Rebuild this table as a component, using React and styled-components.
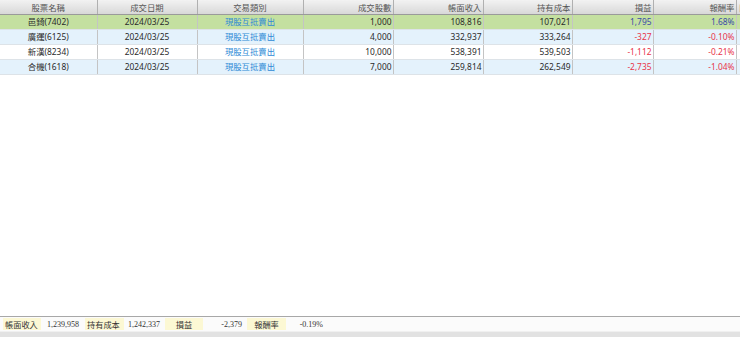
import React from 'react';
import styled, { createGlobalStyle } from 'styled-components';

const GlobalStyle = createGlobalStyle`
  html, body {
    margin: 0;
    padding: 0;
    background: #ffffff;
  }
  body {
    font-family: "Noto Sans", "Noto Sans CJK TC", sans-serif;
  }
`;

const columns = [
  { key: 'name', title: '股票名稱', width: 97, align: 'center' },
  { key: 'date', title: '成交日期', width: 100, align: 'center' },
  { key: 'type', title: '交易類別', width: 106, align: 'center' },
  { key: 'qty', title: '成交股數', width: 90, align: 'right' },
  { key: 'income', title: '帳面收入', width: 90, align: 'right' },
  { key: 'cost', title: '持有成本', width: 89, align: 'right' },
  { key: 'pnl', title: '損益', width: 81, align: 'right' },
  { key: 'rate', title: '報酬率', width: 83, align: 'right' },
  { key: 'day', title: '日', width: 70, align: 'left' },
];

const rows = [
  { name: '邑錡(7402)', date: '2024/03/25', type: '現股互抵賣出', qty: '1,000', income: '108,816', cost: '107,021', pnl: '1,795', rate: '1.68%', day: '', tone: 'selected' },
  { name: '廣運(6125)', date: '2024/03/25', type: '現股互抵賣出', qty: '4,000', income: '332,937', cost: '333,264', pnl: '-327', rate: '-0.10%', day: '', tone: 'alt' },
  { name: '新漢(8234)', date: '2024/03/25', type: '現股互抵賣出', qty: '10,000', income: '538,391', cost: '539,503', pnl: '-1,112', rate: '-0.21%', day: '', tone: 'plain' },
  { name: '合機(1618)', date: '2024/03/25', type: '現股互抵賣出', qty: '7,000', income: '259,814', cost: '262,549', pnl: '-2,735', rate: '-1.04%', day: '', tone: 'alt' },
];

const rowBg = {
  selected: '#c4e0a0',
  alt: '#e4f2fc',
  plain: '#ffffff',
};

const valueColor = (key, row) => {
  if (key === 'type') return '#2e8ad6';
  if (key === 'pnl' || key === 'rate') {
    return row[key].startsWith('-') ? '#e8344a' : '#3a4aa8';
  }
  return '#2a2a2a';
};

const App = () => {
  return (
    <Screen>
      <GlobalStyle />
      <GridArea>
        <Table>
          <colgroup>
            {columns.map((c) => (
              <col key={c.key} style={{ width: c.width }} />
            ))}
          </colgroup>
          <thead>
            <tr>
              {columns.map((c) => (
                <HeadCell key={c.key} $align={c.align}>
                  {c.title}
                </HeadCell>
              ))}
            </tr>
          </thead>
          <tbody>
            {rows.map((row) => (
              <Row key={row.name} $tone={row.tone}>
                {columns.map((c) => (
                  <Cell key={c.key} $align={c.align} $color={valueColor(c.key, row)}>
                    {row[c.key]}
                  </Cell>
                ))}
              </Row>
            ))}
          </tbody>
        </Table>
      </GridArea>
      <Summary>
        <Label $w={38} $align="left">帳面收入</Label>
        <Value $w={44} $align="left" $pad="0 0 0 6px">1,239,958</Value>
        <Label $w={39} $align="left">持有成本</Label>
        <Value $w={41} $align="left" $pad="0 0 0 4px">1,242,337</Value>
        <Label $w={38} $align="center">損益</Label>
        <Value $w={44} $align="right" $pad="0 5px 0 0">-2,379</Value>
        <Label $w={39} $align="center">報酬率</Label>
        <Value $w={40} $align="right" $pad="0 3px 0 0">-0.19%</Value>
      </Summary>
      <BottomStrip />
    </Screen>
  );
};

const Screen = styled.div`
  width: 740px;
  height: 337px;
  display: flex;
  flex-direction: column;
  overflow: hidden;
  background: #ffffff;
`;

const GridArea = styled.div`
  flex: 1;
  overflow: hidden;
`;

const Table = styled.table`
  table-layout: fixed;
  width: 806px;
  border-collapse: collapse;
  font-size: 8.4px;
`;

const HeadCell = styled.th`
  height: 14px;
  padding: ${(p) => (p.$align === 'right' ? '0 1px 0 2px' : '0 2px')};
  line-height: 13px;
  font-weight: normal;
  color: #555555;
  text-align: ${(p) => p.$align};
  white-space: nowrap;
  overflow: hidden;
  background: linear-gradient(#f2f2f2, #d8d8d8);
  border-right: 1px solid #b0b0b0;
  border-bottom: 1px solid #9a9a9a;
`;

const Row = styled.tr`
  background: ${(p) => rowBg[p.$tone]};
`;

const Cell = styled.td`
  height: 14px;
  padding: ${(p) => (p.$align === 'right' ? '0 1px 0 2px' : '0 2px')};
  line-height: 14px;
  color: ${(p) => p.$color};
  text-align: ${(p) => p.$align};
  white-space: nowrap;
  overflow: hidden;
  border-right: 1px solid #c4c4c4;
  border-bottom: 1px solid #dde3e8;
`;

const Summary = styled.div`
  display: flex;
  align-items: center;
  height: 14px;
  padding-left: 3px;
  background: #fbfbfb;
  border-top: 1px solid #a8a8a8;
  font-family: "Liberation Serif", "Noto Sans CJK TC", serif;
  font-size: 8px;
  color: #333333;
`;

const Label = styled.span`
  box-sizing: border-box;
  width: ${(p) => p.$w}px;
  height: 12px;
  line-height: 12px;
  padding: 0 2px;
  text-align: ${(p) => p.$align};
  background: #fcf8d4;
  font-family: "Noto Sans CJK TC", sans-serif;
  font-size: 8.2px;
  white-space: nowrap;
  overflow: hidden;
`;

const Value = styled.span`
  box-sizing: border-box;
  width: ${(p) => p.$w}px;
  padding: ${(p) => p.$pad};
  text-align: ${(p) => p.$align};
  white-space: nowrap;
`;

const BottomStrip = styled.div`
  height: 5px;
  background: #e2e2e2;
  border-top: 1px solid #f0f0f0;
`;

export default App;
